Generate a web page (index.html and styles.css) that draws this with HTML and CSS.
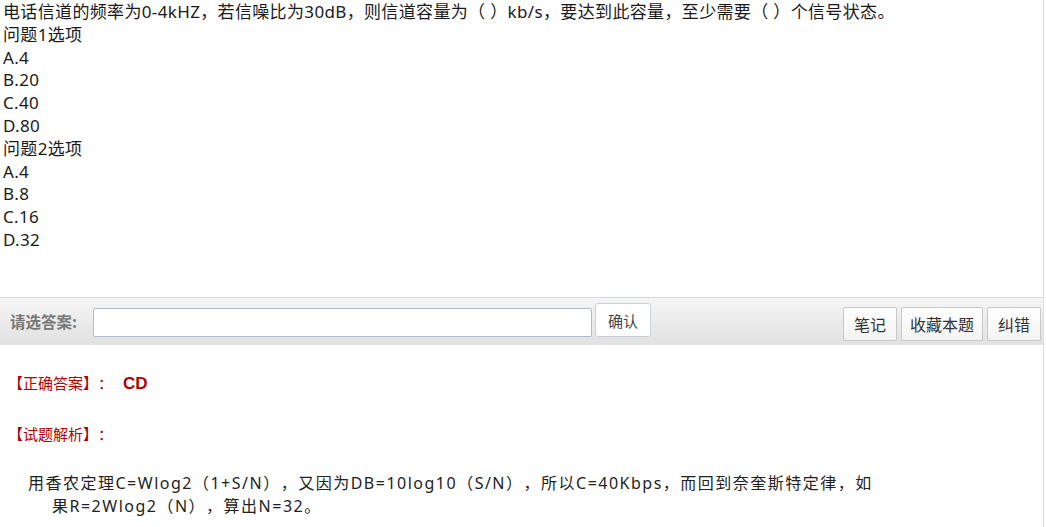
FILE: index.html
```html
<!DOCTYPE html>
<html lang="zh-CN">
<head>
<meta charset="utf-8">
<link rel="stylesheet" href="styles.css">
</head>
<body>
<div class="page">
  <div class="question">
    <div>电话信道的频率为0-4kHZ，若信噪比为30dB，则信道容量为（ ）kb/s，要达到此容量，至少需要（ ）个信号状态。</div>
    <div>问题1选项</div>
    <div>A.4</div>
    <div>B.20</div>
    <div>C.40</div>
    <div>D.80</div>
    <div>问题2选项</div>
    <div>A.4</div>
    <div>B.8</div>
    <div>C.16</div>
    <div>D.32</div>
  </div>
  <div class="bar">
    <span class="label">请选答案:</span>
    <input class="answer-input" type="text">
    <button class="btn btn-confirm">确认</button>
    <div class="bar-right">
      <button class="btn btn-tool w54">笔记</button>
      <button class="btn btn-tool w82">收藏本题</button>
      <button class="btn btn-tool w54">纠错</button>
    </div>
  </div>
  <div class="result">
    <div class="correct"><span class="red">【正确答案】：</span><b class="red ans">CD</b></div>
    <div class="analysis red">【试题解析】：</div>
    <div class="explain">用香农定理C=Wlog2（1+S/N），又因为DB=10log10（S/N），所以C=40Kbps，而回到奈奎斯特定律，如<br>果R=2Wlog2（N），算出N=32。</div>
  </div>
</div>
</body>
</html>
```

FILE: styles.css
```css
html, body {
  margin: 0;
  padding: 0;
  background: #fff;
}
body {
  font-family: "Noto Sans", "Noto Sans CJK SC", sans-serif;
  color: #222;
  text-spacing-trim: space-all;
}
.page {
  width: 1043px;
  min-height: 527px;
  border-right: 1px solid #dddddd;
}
.question {
  box-sizing: border-box;
  height: 297px;
  padding: 1px 0 0 3px;
  font-size: 17px;
  line-height: 22.8px;
  letter-spacing: 0.35px;
  color: #1a1a1a;
}
.bar {
  display: flex;
  align-items: flex-start;
  height: 47px;
  border-top: 1px solid #d9d9d9;
  background: linear-gradient(#f5f5f5, #e1e1e1);
  padding: 0 2px 0 10px;
}
.label {
  margin-top: 12px;
  width: 83px;
  font-family: "Noto Sans CJK SC", sans-serif;
  font-size: 15.5px;
  font-weight: bold;
  color: #777;
  line-height: 22px;
}
.answer-input {
  margin: 10px 0 0 0;
  width: 499px;
  height: 29px;
  box-sizing: border-box;
  border: 1px solid #a9bcd2;
  border-radius: 2px;
  background: #fff;
  padding: 0 4px;
}
.btn {
  font-family: "Noto Sans CJK SC", sans-serif;
  box-sizing: border-box;
  background: linear-gradient(#ffffff, #f3f3f3);
  border: 1px solid #c8c8c8;
  color: #333;
  padding: 0;
  cursor: pointer;
}
.btn-confirm {
  margin: 5px 0 0 3px;
  width: 56px;
  height: 34px;
  border-radius: 3px;
  font-size: 15px;
  color: #444;
  background: #fff;
  border-color: #c9d0da;
}
.bar-right {
  margin-left: auto;
  display: flex;
  gap: 4px;
  margin-top: 9px;
}
.btn-tool {
  height: 34px;
  border-radius: 2px;
  font-size: 16px;
}
.w54 { width: 54px; }
.w82 { width: 82px; }
.result {
  padding: 27px 0 0 8px;
}
.red {
  color: #b20000;
}
.correct {
  font-size: 15px;
  line-height: 22px;
}
.ans {
  font-family: "Liberation Sans", "Noto Sans", sans-serif;
  font-size: 17px;
  margin-left: 10px;
}
.analysis {
  margin-top: 28px;
  font-size: 15px;
  line-height: 22px;
}
.explain {
  margin-top: 27px;
  padding-left: 44px;
  text-indent: -24px;
  font-size: 16px;
  line-height: 23px;
  letter-spacing: 1.5px;
  color: #222;
  white-space: nowrap;
}
```
